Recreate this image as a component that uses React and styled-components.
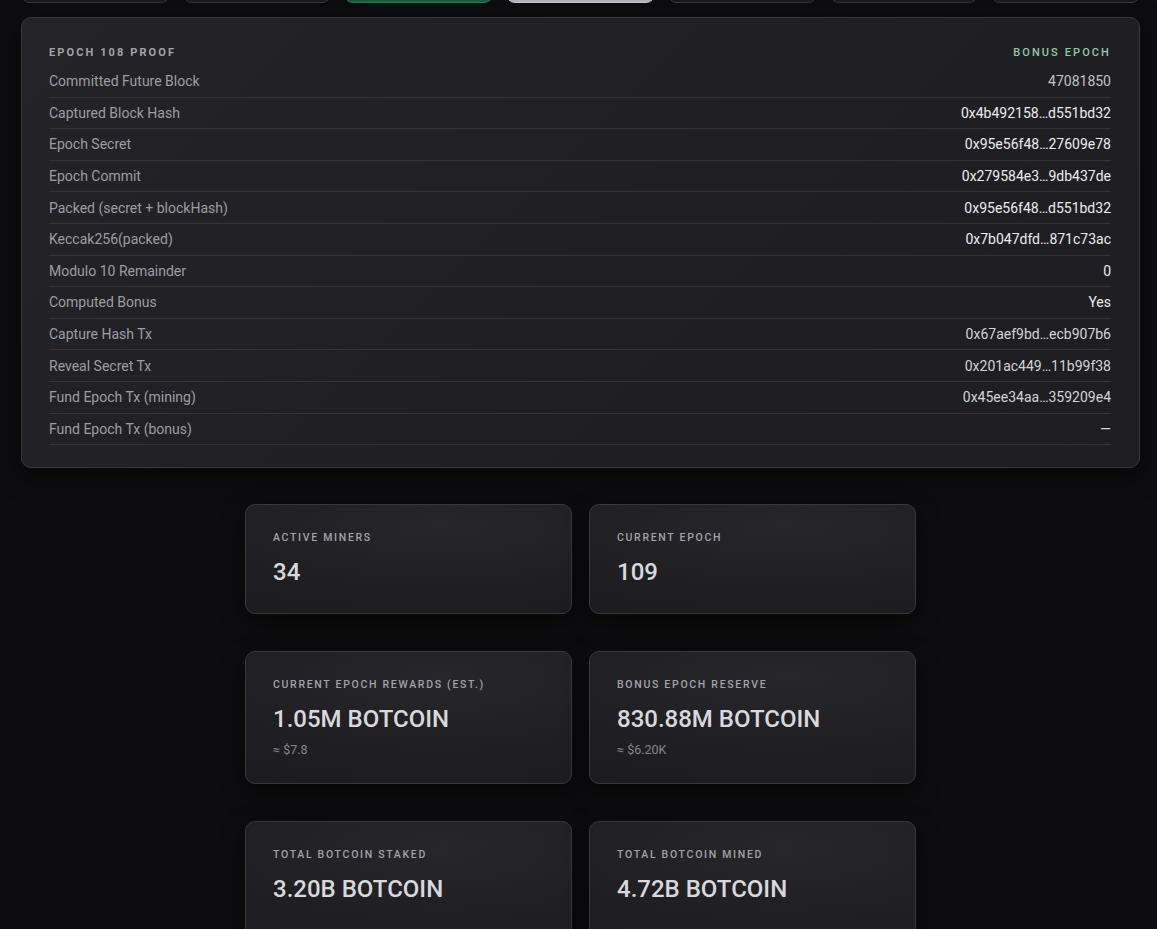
import React from "react";
import styled, { createGlobalStyle, css } from "styled-components";

const Global = createGlobalStyle`
  html, body { margin: 0; padding: 0; background: #0d0d0f; }
  body { font-family: Roboto, "Liberation Sans", sans-serif; color: #d6d6da; }
  * { box-sizing: border-box; }
`;

const Page = styled.div`
  width: 1157px;
  min-height: 929px;
  overflow: hidden;
  padding: 0 17px 0 21px;
`;

const TabRow = styled.div`
  display: flex;
  gap: 13px;
  margin-top: -34px;
  width: 1119px;
`;

const Tab = styled.div`
  flex: 1;
  height: 37px;
  border-radius: 9px;
  border: 1px solid #38383d;
  background: #18181b;
  ${(p) =>
    p.$variant === "green" &&
    css`
      background: #1f5a3f;
      border-color: #2e7650;
    `}
  ${(p) =>
    p.$variant === "light" &&
    css`
      background: #b1b1b7;
      border-color: #c4c4ca;
    `}
`;

const ProofCard = styled.section`
  margin-top: 14px;
  width: 1119px;
  border: 1px solid #38383d;
  border-radius: 10px;
  background: linear-gradient(135deg, #242428 0%, #202024 50%, #1e1e22 100%);
  box-shadow: 0 8px 24px rgba(0, 0, 0, 0.5);
  padding: 26px 28px 22px 27px;
`;

const ProofHeader = styled.div`
  display: flex;
  justify-content: space-between;
  align-items: center;
  height: 16px;
  margin-bottom: 6px;
`;

const Eyebrow = styled.span`
  font-size: 11px;
  letter-spacing: 2.1px;
  text-transform: uppercase;
  color: ${(p) => p.$color || "#a3a3aa"};
  font-weight: ${(p) => p.$weight || 700};
`;

const Row = styled.div`
  display: flex;
  justify-content: space-between;
  align-items: center;
  height: 31.6px;
  border-bottom: 1px solid #333338;
  font-size: 14px;
`;

const Label = styled.span`
  color: #9d9da3;
`;

const Value = styled.span`
  color: ${(p) => (p.$tone === "dim" ? "#c2c2c6" : p.$tone === "bright" ? "#ececf0" : "#d3d3d7")};
  font-weight: 400;
`;

const StatGrid = styled.div`
  width: 671px;
  margin: 36px auto 0;
  display: grid;
  grid-template-columns: 327px 327px;
  column-gap: 17px;
  row-gap: 37px;
`;

const StatCard = styled.div`
  border: 1px solid #38383d;
  border-radius: 10px;
  background: radial-gradient(120% 90% at 60% 20%, #27272b 0%, #202024 55%, #1c1c20 100%);
  box-shadow: 0 8px 22px rgba(0, 0, 0, 0.55);
  padding: 26px 27px 0;
  min-height: ${(p) => (p.$tall ? "133px" : "110px")};
`;

const StatLabel = styled.div`
  font-size: 10.5px;
  font-weight: 500;
  letter-spacing: 1.7px;
  text-transform: uppercase;
  color: #a2a2a8;
  line-height: 14px;
`;

const StatValue = styled.div`
  margin-top: 12px;
  font-size: 24px;
  font-weight: 500;
  color: #d9d9dd;
  line-height: 30px;
`;

const StatSub = styled.div`
  margin-top: 8px;
  font-size: 12.5px;
  color: #86868c;
  line-height: 16px;
`;

const rows = [
  ["Committed Future Block", "47081850", "dim"],
  ["Captured Block Hash", "0x4b492158…d551bd32", "bright"],
  ["Epoch Secret", "0x95e56f48…27609e78", "bright"],
  ["Epoch Commit", "0x279584e3…9db437de", "bright"],
  ["Packed (secret + blockHash)", "0x95e56f48…d551bd32", "bright"],
  ["Keccak256(packed)", "0x7b047dfd…871c73ac", "bright"],
  ["Modulo 10 Remainder", "0", "bright"],
  ["Computed Bonus", "Yes", "bright"],
  ["Capture Hash Tx", "0x67aef9bd…ecb907b6", "mid"],
  ["Reveal Secret Tx", "0x201ac449…11b99f38", "mid"],
  ["Fund Epoch Tx (mining)", "0x45ee34aa…359209e4", "mid"],
  ["Fund Epoch Tx (bonus)", "—", "mid"],
];

const stats = [
  { label: "Active Miners", value: "34" },
  { label: "Current Epoch", value: "109" },
  { label: "Current Epoch Rewards (est.)", value: "1.05M BOTCOIN", sub: "≈ $7.8" },
  { label: "Bonus Epoch Reserve", value: "830.88M BOTCOIN", sub: "≈ $6.20K" },
  { label: "Total BOTCOIN Staked", value: "3.20B BOTCOIN", tall: true },
  { label: "Total BOTCOIN Mined", value: "4.72B BOTCOIN", tall: true },
];

export default function App() {
  return (
    <>
      <Global />
      <Page>
        <TabRow>
          <Tab />
          <Tab />
          <Tab $variant="green" />
          <Tab $variant="light" />
          <Tab />
          <Tab />
          <Tab />
        </TabRow>
        <ProofCard>
          <ProofHeader>
            <Eyebrow>Epoch 108 Proof</Eyebrow>
            <Eyebrow $color="#8fcaa6" $weight={500}>Bonus Epoch</Eyebrow>
          </ProofHeader>
          {rows.map(([l, v, t]) => (
            <Row key={l}>
              <Label>{l}</Label>
              <Value $tone={t}>{v}</Value>
            </Row>
          ))}
        </ProofCard>
        <StatGrid>
          {stats.map((s) => (
            <StatCard key={s.label} $tall={!!s.sub || s.tall}>
              <StatLabel>{s.label}</StatLabel>
              <StatValue>{s.value}</StatValue>
              {s.sub && <StatSub>{s.sub}</StatSub>}
            </StatCard>
          ))}
        </StatGrid>
      </Page>
    </>
  );
}
